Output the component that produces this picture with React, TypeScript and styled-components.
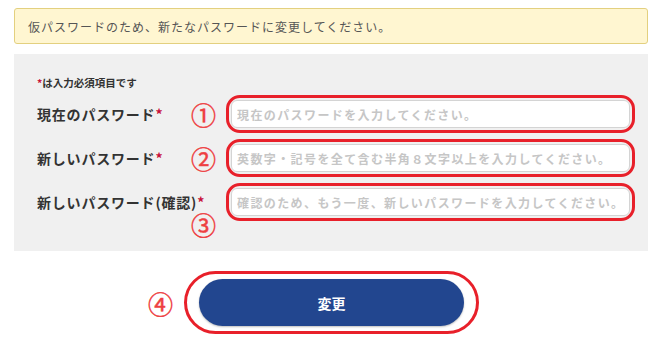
import React from "react";
import styled, { createGlobalStyle } from "styled-components";

const GlobalStyle = createGlobalStyle`
  body {
    margin: 0;
    background: #fff;
    font-family: "Noto Sans CJK JP", "Noto Sans", sans-serif;
    color: #333;
  }
`;

interface Field {
  label: string;
  placeholder: string;
  mark: string;
  low?: boolean;
}

const fields: Field[] = [
  { label: "現在のパスワード", placeholder: "現在のパスワードを入力してください。", mark: "①" },
  {
    label: "新しいパスワード",
    placeholder: "英数字・記号を全て含む半角８文字以上を入力してください。",
    mark: "②",
  },
  {
    label: "新しいパスワード(確認)",
    placeholder: "確認のため、もう一度、新しいパスワードを入力してください。",
    mark: "③",
    low: true,
  },
];

const App = () => {
  return (
    <Page>
      <GlobalStyle />
      <Notice>仮パスワードのため、新たなパスワードに変更してください。</Notice>
      <Panel>
        <Note>
          <Req>*</Req>は入力必須項目です
        </Note>
        <Grid>
          {fields.map((f) => (
            <React.Fragment key={f.mark}>
              <Label>
                {f.label}
                <Req>*</Req>
              </Label>
              <Mark $low={f.low}>{f.mark}</Mark>
              <Highlight>
                <Input type="password" placeholder={f.placeholder} />
              </Highlight>
            </React.Fragment>
          ))}
        </Grid>
      </Panel>
      <Actions>
        <Mark>④</Mark>
        <ButtonRing>
          <Submit>変更</Submit>
        </ButtonRing>
      </Actions>
    </Page>
  );
};

export default App;

const Page = styled.div`
  padding: 8px 2px 0 14px;
`;

const Notice = styled.div`
  height: 34px;
  display: flex;
  align-items: center;
  padding-left: 13px;
  background: #fff6d1;
  border: 1px solid #e3d07f;
  border-radius: 3px;
  font-size: 12px;
  letter-spacing: 1px;
  color: #555;
`;

const Panel = styled.div`
  margin-top: 10px;
  background: #f0f0f0;
  padding: 22px 13px 30px 23px;
`;

const Note = styled.div`
  font-size: 10.5px;
  line-height: 14px;
  font-weight: 700;
  color: #333;
  margin-bottom: 5px;
`;

const Req = styled.span`
  color: #c8103a;
  font-weight: 700;
`;

const Grid = styled.div`
  display: grid;
  grid-template-columns: 154px 35px 1fr;
  grid-auto-rows: 38px;
  row-gap: 6px;
  align-items: center;
`;

const Label = styled.div`
  font-size: 14px;
  line-height: 18px;
  font-weight: 700;
  letter-spacing: 0.8px;
  color: #333;
  white-space: nowrap;
`;

const Mark = styled.div<{ $low?: boolean }>`
  font-size: 25px;
  line-height: 22px;
  font-weight: 400;
  color: #ee3f42;
  -webkit-text-stroke: 0.5px #ee3f42;
  ${(p) => (p.$low ? "align-self: end; margin-bottom: -14px;" : "")}
`;

const Highlight = styled.div`
  border: 3px solid #e8202a;
  border-radius: 14px;
  padding: 2px;
  height: 38px;
  box-sizing: border-box;
  display: flex;
`;

const Input = styled.input`
  flex: 1;
  min-width: 0;
  border: 1px solid #d4d4d4;
  border-radius: 6px;
  background: #fff;
  padding: 0 5px;
  font-family: inherit;
  font-size: 12px;
  letter-spacing: 1.4px;
  outline: none;
  &::placeholder {
    color: #c6c6c6;
    font-weight: 700;
  }
`;

const Actions = styled.div`
  display: flex;
  align-items: center;
  gap: 11px;
  padding-left: 134px;
  margin-top: 20px;
`;

const ButtonRing = styled.div`
  border: 3px solid #e8202a;
  border-radius: 32px;
  padding: 5px 12px;
`;

const Submit = styled.button`
  width: 265px;
  height: 47px;
  border: none;
  border-radius: 24px;
  background: #22468f;
  color: #fff;
  font-family: inherit;
  font-size: 14px;
  font-weight: 700;
  box-shadow: 0 1px 2px rgba(0, 0, 0, 0.25);
  cursor: pointer;
`;
